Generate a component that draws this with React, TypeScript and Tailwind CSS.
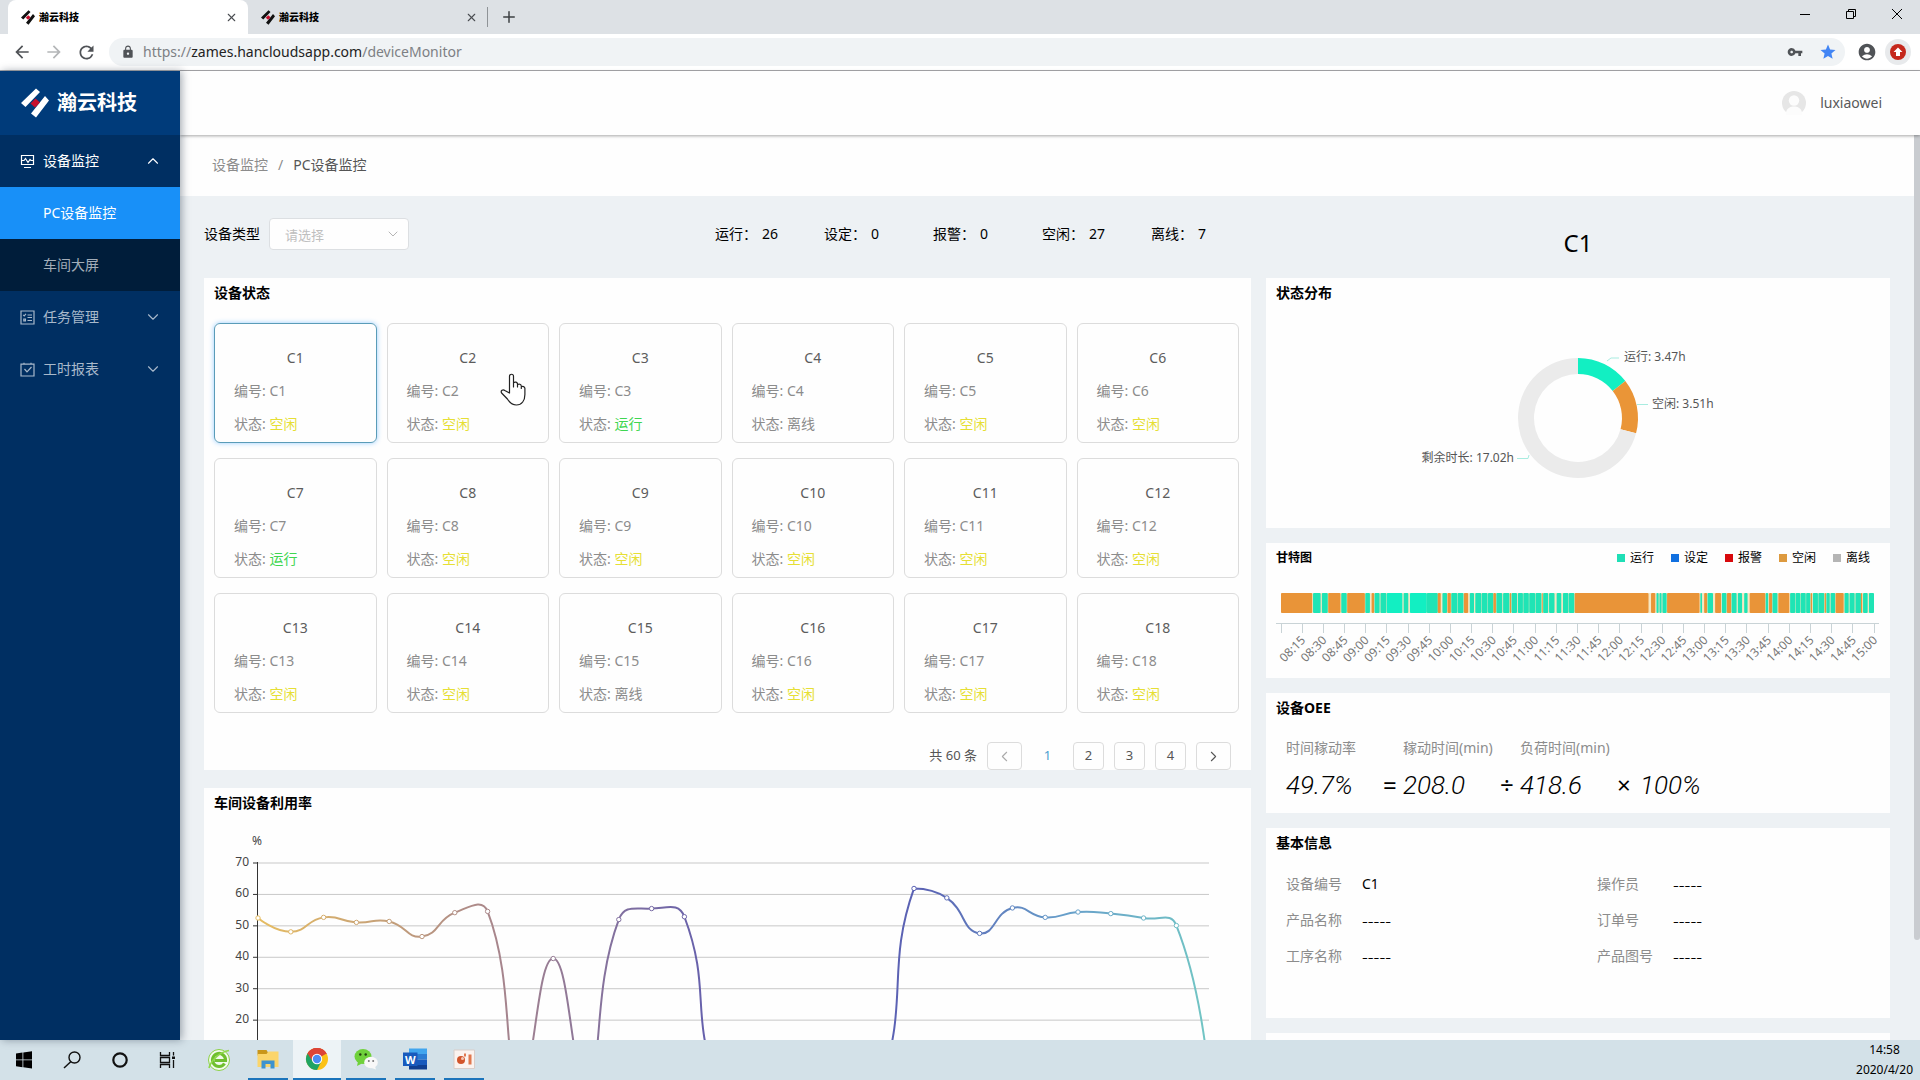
import type { ReactNode } from 'react'
import clsx from 'clsx'
import { ChevronDown, ChevronLeft, ChevronRight, ChevronUp, Plus, X } from 'lucide-react'
import { MdAccountCircle, MdArrowBack, MdArrowForward, MdLock, MdRefresh, MdStar, MdVpnKey } from 'react-icons/md'

type Status = '运行' | '空闲' | '离线'

const STATUS_COLOR: Record<Status, string> = {
  运行: 'text-[#3fd651]',
  空闲: 'text-[#e6df35]',
  离线: 'text-[#8c8c8c]',
}

const STATUS_OVERRIDES: Record<string, Status> = { C3: '运行', C4: '离线', C7: '运行', C15: '离线' }

const devices = Array.from({ length: 18 }, (_, i) => {
  const name = `C${i + 1}`
  return { name, status: STATUS_OVERRIDES[name] ?? ('空闲' as Status) }
})

const counts = [
  ['运行', 26],
  ['设定', 0],
  ['报警', 0],
  ['空闲', 27],
  ['离线', 7],
] as const

const legend = [
  ['运行', 'bg-[#1fdfb6]'],
  ['设定', 'bg-[#1170e0]'],
  ['报警', 'bg-[#d8090c]'],
  ['空闲', 'bg-[#dd9a3f]'],
  ['离线', 'bg-[#b5b5b5]'],
] as const

const info = [
  ['设备编号', 'C1'],
  ['操作员', ''],
  ['产品名称', ''],
  ['订单号', ''],
  ['工序名称', ''],
  ['产品图号', ''],
]

// [idle?, start, end] on a 0..1407 scale covering 08:00 - 15:00
const gantt: [0 | 1, number, number][] = [
  [1, 0, 74], [0, 76, 94], [0, 97, 111], [1, 112, 141], [0, 143, 156], [1, 157, 199],
  [0, 200, 211], [1, 215, 221], [0, 222, 234], [0, 236, 250], [0, 251, 288], [0, 291, 302],
  [0, 306, 346], [0, 346, 372], [1, 372, 379], [0, 383, 394], [1, 395, 403], [0, 404, 418],
  [0, 419, 433], [1, 434, 444], [0, 448, 458], [0, 461, 475], [0, 476, 490], [0, 491, 504],
  [1, 504, 510], [0, 511, 525], [0, 527, 542], [1, 543, 546], [0, 547, 560], [0, 562, 574],
  [0, 575, 588], [0, 589, 603], [0, 604, 618], [1, 619, 621], [0, 622, 634], [0, 636, 649],
  [0, 654, 665], [0, 669, 682], [0, 683, 696], [1, 697, 872], [1, 878, 888], [0, 891, 896],
  [0, 898, 903], [0, 905, 915], [1, 916, 993], [0, 995, 999], [1, 1004, 1011], [0, 1012, 1025],
  [1, 1030, 1044], [0, 1046, 1057], [1, 1058, 1068], [0, 1069, 1081], [0, 1084, 1094], [0, 1099, 1107],
  [1, 1112, 1149], [0, 1150, 1156], [1, 1158, 1165], [0, 1166, 1178], [1, 1180, 1206], [0, 1208, 1220],
  [0, 1221, 1232], [0, 1233, 1245], [0, 1246, 1256], [1, 1257, 1260], [0, 1262, 1274], [0, 1275, 1289],
  [1, 1290, 1293], [0, 1294, 1302], [0, 1304, 1315], [1, 1316, 1335], [0, 1337, 1347], [0, 1349, 1361],
  [0, 1363, 1376], [1, 1376, 1379], [0, 1381, 1392], [0, 1395, 1407],
]

const usage = [
  52.5, 48.1, 52.7, 51.1, 51.4, 46.6, 54.2, 54.6, 0, 39.6, 0, 52, 55.5, 52.9, 0,
  0, 0, 0, 0, 0, 61.9, 58.9, 47.6, 55.7, 52.7, 54.4, 53.9, 52.5, 50.1, 0,
]

function Logo({ className, bar }: { className: string, bar: string }) {
  return (
    <svg className={className} viewBox="0 0 28 30" aria-hidden="true">
      <path d="M15 0.5 19 4 4.5 19 0 15ZM24 8 28 12.5 15 29.5 10 25.5Z" fill={bar} />
      <path d="M14.5 10.5 19 14.500 14 19.500 9.500 15.500Z" fill="#c8102e" />
    </svg>
  )
}

function Tab({ active }: { active?: boolean }) {
  return (
    <div className={clsx('flex h-full w-60 items-center gap-1 pl-[13px] pr-2.5', active && 'rounded-t-lg bg-white')}>
      <Logo className="h-[15px] w-3.5" bar="#111" />
      <span className="flex-1 text-[10px] font-black text-black">瀚云科技</span>
      <button type="button" aria-label="关闭标签页"><X size={13} strokeWidth={2} className="text-[#4a4d51]" /></button>
    </div>
  )
}

function BrowserBar() {
  return (
    <header className="shrink-0 border-b border-[#a9a9ad]">
      <div className="flex h-[34px] items-center bg-[#dde1e5] pl-2">
        <Tab active />
        <Tab />
        <span className="-ml-px h-5 w-px bg-[#8f9397]" />
        <button type="button" aria-label="新标签页" className="ml-3"><Plus size={18} strokeWidth={2} className="text-[#3c4043]" /></button>
        <div className="ml-auto flex gap-8 pb-1.5 pr-4 text-black">
          <button type="button" aria-label="最小化">
            <svg width="14" height="14" viewBox="0 0 14 14"><path d="M2 7.5H12" stroke="currentColor" /></svg>
          </button>
          <button type="button" aria-label="还原">
            <svg width="14" height="14" viewBox="0 0 14 14" fill="none" stroke="currentColor"><path d="M2.5 4.5h7v7h-7zM4.5 4.5v-2h7v7h-2" /></svg>
          </button>
          <button type="button" aria-label="关闭">
            <svg width="14" height="14" viewBox="0 0 14 14"><path d="M2 2 12 12M12 2 2 12" stroke="currentColor" /></svg>
          </button>
        </div>
      </div>
      <div className="flex h-9 items-center gap-3 bg-white pl-3 pr-[9px] text-[#505357]">
        <button type="button" aria-label="后退"><MdArrowBack size={20} /></button>
        <button type="button" aria-label="前进"><MdArrowForward size={20} className="text-[#b4b6b8]" /></button>
        <button type="button" aria-label="刷新"><MdRefresh size={21} /></button>
        <div className="flex h-7 flex-1 items-center rounded-full bg-[#f0f3f5] pl-3 pr-2">
          <MdLock size={14} />
          <span className="ml-2 text-sm leading-5 text-[#7d8084]">
            https://
            <span className="text-[#222]">zames.hancloudsapp.com</span>
            /deviceMonitor
          </span>
          <span className="ml-auto flex items-center gap-4">
            <MdVpnKey size={16} />
            <MdStar size={18} className="text-[#4285f4]" />
          </span>
        </div>
        <MdAccountCircle size={20} />
        <span className="-ml-1 flex size-[26px] items-center justify-center rounded-full bg-[#e8eaec]">
          <svg width="16" height="16" viewBox="0 0 16 16">
            <circle cx="8" cy="8" r="8" fill="#c5281c" />
            <path d="M8 3.5 12.5 8H10v4H6V8H3.5Z" fill="#fff" />
          </svg>
        </span>
      </div>
    </header>
  )
}

function MenuItem({ icon, label, open }: { icon: ReactNode, label: string, open?: boolean }) {
  return (
    <button type="button" className={clsx('flex h-[52px] w-full items-center gap-2 pl-5 pr-[18px]', open ? 'text-white' : 'text-[#a8b9cb]')}>
      <svg width="15" height="15" viewBox="0 0 15 15" fill="none" stroke="currentColor" strokeWidth="1.2">{icon}</svg>
      <span className="flex-1 text-left">{label}</span>
      {open ? <ChevronUp size={18} strokeWidth={1.5} /> : <ChevronDown size={18} strokeWidth={1.5} />}
    </button>
  )
}

function Sidebar() {
  return (
    <aside className="z-10 w-[180px] shrink-0 bg-[#002f62] text-sm shadow-[2px_0_8px_rgba(0,21,41,0.35)]">
      <div className="flex h-16 items-center gap-2 bg-[#003b7a] pl-[21px]">
        <Logo className="h-[30px] w-7" bar="#fff" />
        <span className="text-xl font-bold text-white">瀚云科技</span>
      </div>
      <nav>
        <MenuItem
          open
          label="设备监控"
          icon={<path d="M1.5 1.5h12v9h-12zM4 13.5h7M1.5 6.5H4l1.5-2 2.5 4 2-3 1 1h2.5" />}
        />
        <div className="bg-[#001d3a]">
          <a href="#pc" className="flex h-[52px] items-center bg-[#1890f8] pl-[43px] text-white">PC设备监控</a>
          <a href="#screen" className="flex h-[52px] items-center pl-[43px] text-[#a3adb8]">车间大屏</a>
        </div>
        <MenuItem label="任务管理" icon={<path d="M1 1h13v13H1zM3.2 4.8l1 1 1.8-2M7.5 5H12M7.5 7.5H12M7.5 10.5H12M3.8 9h1.6v1.8H3.8z" />} />
        <MenuItem label="工时报表" icon={<path d="M1 2.2h13V14H1zM4 .8v2M11 .8v2M4.5 7l2.5 2.8L11.5 5" />} />
      </nav>
    </aside>
  )
}

function Panel({ title, extra, small, className, children }: { title: string, extra?: ReactNode, small?: boolean, className?: string, children?: ReactNode }) {
  return (
    <section className={clsx('bg-[#fefefe] pt-1', className)}>
      <div className="flex items-center justify-between pl-2.5 pr-5">
        <h2 className={clsx('font-bold leading-[22px] text-black', small ? 'text-xs' : 'text-sm')}>{title}</h2>
        {extra}
      </div>
      {children}
    </section>
  )
}

function HandCursor() {
  return (
    <svg className="pointer-events-none absolute left-[112px] top-[49px]" width="27" height="33" viewBox="0 0 27 33" aria-hidden="true">
      <path
        d="M9.500 20V3.200c0-2.600 4-2.600 4 0V14v-4.200c1.500-1.400 3.800-.8 4 1.200v3-2.400c1.500-1 3.600-.4 3.800 1.400v2.400-1.600c1.500-.9 3.500-.2 3.600 1.600v6.100c0 6-3 10.500-8.500 10.500-4.500 0-6.600-2-9-6L1.600 20c-1.400-2.400 1.400-4 3.200-2.500z"
        fill="#fff"
        stroke="#222"
        strokeWidth="1.200"
        strokeLinejoin="round"
      />
    </svg>
  )
}

function DeviceCard({ name, status, selected }: { name: string, status: Status, selected: boolean }) {
  return (
    <button
      type="button"
      className={clsx(
        'relative flex h-[120px] flex-col gap-[11px] rounded-md border px-[19px] pt-[23px] text-left text-sm leading-[22px] text-[#8c8c8c]',
        selected ? 'border-[#5a9cb8] shadow-[0_0_5px_rgba(24,144,255,0.45)]' : 'border-[#dcdcdc]',
      )}
    >
      <span className="w-full text-center text-[#5c5c5c]">{name}</span>
      <span>{`编号: ${name}`}</span>
      <span>
        {'状态: '}
        <span className={STATUS_COLOR[status]}>{status}</span>
      </span>
      {name === 'C2' && <HandCursor />}
    </button>
  )
}

function Pagination() {
  const box = 'flex h-7 items-center justify-center rounded border border-[#dcdcdc]'
  return (
    <div className="-mb-0.5 mt-[29px] flex items-center justify-end gap-2.5 pr-5 text-[13px] text-[#555]">
      <span>共 60 条</span>
      <button type="button" disabled aria-label="上一页" className={clsx(box, 'w-[35px]')}><ChevronLeft size={17} strokeWidth={1.5} className="text-[#aaa]" /></button>
      <button type="button" className="flex h-7 w-[31px] items-center justify-center rounded bg-[#fefefe] text-[#4a9fd0]">1</button>
      {[2, 3, 4].map(n => <button key={n} type="button" className={clsx(box, 'w-[31px]')}>{n}</button>)}
      <button type="button" aria-label="下一页" className={clsx(box, 'w-[35px]')}><ChevronRight size={17} strokeWidth={1.5} /></button>
    </div>
  )
}

const BASE_Y = 269
const TOP_Y = 49
const pts = usage.map((v, i) => [54 + i * 32.8, BASE_Y - v * ((BASE_Y - TOP_Y) / 70)])

// smooth bezier through all points, control points kept inside the plot
function smoothPath(p: number[][]) {
  const clampY = (y: number) => Math.min(BASE_Y, Math.max(pts[20][1], y))
  let d = `M${p[0][0]} ${p[0][1]}`
  let c0 = p[0]
  for (let i = 1; i < p.length; i++) {
    const cur = p[i]
    const next = p[i + 1]
    let c1 = cur
    let nextC0 = cur
    if (next) {
      const prev = p[i - 1]
      const v = [next[0] - prev[0], next[1] - prev[1]]
      const a = Math.hypot(cur[0] - prev[0], cur[1] - prev[1])
      const b = Math.hypot(next[0] - cur[0], next[1] - cur[1])
      const r = b / (a + b)
      c1 = [cur[0] - v[0] * 0.5 * (1 - r), clampY(cur[1] - v[1] * 0.5 * (1 - r))]
      nextC0 = [cur[0] + v[0] * 0.5 * r, clampY(cur[1] + v[1] * 0.5 * r)]
    }
    d += `C${c0[0]} ${c0[1]} ${c1[0]} ${c1[1]} ${cur[0]} ${cur[1]}`
    c0 = nextC0
  }
  return d
}

function UsageChart() {
  return (
    <svg className="block w-full" viewBox="0 0 1047 320" role="img" aria-label="车间设备利用率">
      <defs>
        <linearGradient id="usage" gradientUnits="userSpaceOnUse" x1="54" y1="0" x2="1005" y2="0">
          <stop offset="0" stopColor="#e6bd62" />
          <stop offset="0.25" stopColor="#a8868c" />
          <stop offset="0.5" stopColor="#5d5bb0" />
          <stop offset="0.7" stopColor="#5b63b4" />
          <stop offset="0.85" stopColor="#679fca" />
          <stop offset="1" stopColor="#72c6c4" />
        </linearGradient>
      </defs>
      <g fontSize="12" fill="#444">
        <text x="53" y="31" textAnchor="middle">%</text>
        {[70, 60, 50, 40, 30, 20].map((v, i) => {
          const y = TOP_Y + (i * (BASE_Y - TOP_Y)) / 7
          return (
            <g key={v}>
              <path d={`M54 ${y}H1005`} stroke="#c8c8c8" />
              <path d={`M49 ${y}H54`} stroke="#333" />
              <text x="45" y={y + 3} textAnchor="end">{v}</text>
            </g>
          )
        })}
      </g>
      <path d={`M53.500 48V${BASE_Y}`} stroke="#333" />
      <path d={smoothPath(pts)} fill="none" stroke="url(#usage)" strokeWidth="2" />
      {pts.map(([x, y]) => <circle key={x} cx={x} cy={y} r="2.200" fill="#fff" stroke="url(#usage)" />)}
    </svg>
  )
}

function ring(from: number, to: number) {
  const at = (h: number, r: number) => {
    const a = (h / 24) * Math.PI * 2
    return `${312 + r * Math.sin(a)} ${114 - r * Math.cos(a)}`
  }
  const big = to - from > 12 ? 1 : 0
  return `M${at(from, 60)}A60 60 0 ${big} 1 ${at(to, 60)}L${at(to, 44)}A44 44 0 ${big} 0 ${at(from, 44)}Z`
}

function StatusRing() {
  return (
    <svg className="block w-full" viewBox="0 0 624 224" role="img" aria-label="状态分布">
      <path d={ring(0, 3.47)} fill="#12efc2" />
      <path d={ring(3.47, 6.98)} fill="#ea9537" />
      <path d={ring(6.98, 24)} fill="#ebebeb" />
      <g fill="none" stroke="#a8ece0">
        <path d="M341 57 345 54H353" />
        <path d="M371 100.500H382" />
        <path d="M263 151 262 154.500H251" />
      </g>
      <g fontSize="12" fill="#555">
        <text x="358" y="57">运行: 3.47h</text>
        <text x="386" y="104">空闲: 3.51h</text>
        <text x="248" y="158" textAnchor="end">剩余时长: 17.02h</text>
      </g>
    </svg>
  )
}

function GanttChart() {
  const k = 593 / 1407
  const ticks = Array.from({ length: 29 }, (_, i) => {
    const min = 480 + i * 15
    const label = `${String(Math.floor(min / 60)).padStart(2, '0')}:${String(min % 60).padStart(2, '0')}`
    return { x: 15 + i * 21.18, label }
  })
  return (
    <svg className="block w-full" viewBox="0 0 624 109" role="img" aria-label="甘特图">
      <rect x="15" y="24" width="593" height="20" rx="1" fill="#f6e7c3" />
      {gantt.map(([idle, a, b]) => (
        <rect key={a} x={15 + a * k} y="24" width={(b - a) * k} height="20" rx="1" fill={idle ? '#e99438' : b - a > 30 ? '#12efc2' : '#1fe4b5'} />
      ))}
      <path d="M10 54.500H613" stroke="#c9d3d6" />
      {ticks.map(({ x, label }, i) => (
        <g key={label}>
          <path d={`M${Math.floor(x)}.5 54V64`} stroke="#c9d3d6" />
          {i > 0 && <text transform={`translate(${x + 4} 72) rotate(-45)`} textAnchor="end" fontSize="12" fill="#777">{label}</text>}
        </g>
      ))}
    </svg>
  )
}

function Oee() {
  const label = 'whitespace-nowrap text-sm leading-[22px] text-[#8c8c8c]'
  const value = 'font-[Roboto] text-[26px] font-light italic leading-8'
  return (
    <div className="mt-[18px] grid grid-cols-[97px_20px_97px_20px_97px_23px_auto] gap-y-2.5 pl-5 text-black">
      <span className={clsx(label, 'col-span-2')}>时间稼动率</span>
      <span className={clsx(label, 'col-span-2')}>稼动时间(min)</span>
      <span className={clsx(label, 'col-span-3')}>负荷时间(min)</span>
      <span className={value}>49.7%</span>
      <span className="text-2xl leading-8">=</span>
      <span className={value}>208.0</span>
      <span className="text-2xl leading-8">÷</span>
      <span className={value}>418.6</span>
      <span className="text-2xl leading-8">×</span>
      <span className={value}>100%</span>
    </div>
  )
}

function TaskButton({ label, running, active, children }: { label: string, running?: boolean, active?: boolean, children: ReactNode }) {
  return (
    <button type="button" aria-label={label} className={clsx('flex h-10 w-12 flex-col items-center justify-between', active && 'bg-[#edf3f6]')}>
      <span className="flex flex-1 items-center">
        <svg width="24" height="24" viewBox="0 0 24 24">{children}</svg>
      </span>
      {running && <span className={clsx('h-0.5 bg-[#1b74bb]', active ? 'w-full' : 'w-10')} />}
    </button>
  )
}

function Taskbar() {
  return (
    <footer className="flex h-10 shrink-0 items-center justify-between bg-[#d3e1e8] pr-[7px]">
      <div className="flex">
        <TaskButton label="开始"><path d="M4 5.500 10.500 4.600V11.500H4ZM11.300 4.500 20 3.300V11.500H11.300ZM4 12.300H10.500V19.200L4 18.300ZM11.300 12.300H20V20.500L11.300 19.300Z" /></TaskButton>
        <TaskButton label="搜索"><path d="M4 20 11 13.500" stroke="#111" strokeWidth="1.500" /><circle cx="14.500" cy="9.500" r="5.500" fill="none" stroke="#111" strokeWidth="1.400" /></TaskButton>
        <TaskButton label="Cortana"><circle cx="12" cy="12" r="6.700" fill="none" stroke="#111" strokeWidth="2.200" /></TaskButton>
        <TaskButton label="任务视图"><path d="M4.500 4v3.500h9V4M4.500 20v-3.500h9V20M4.500 9.500h9v5h-9zM17.500 4v3.500M17.500 12v8" fill="none" stroke="#111" strokeWidth="1.300" /><path d="M16 8.500h3v2.500h-3z" fill="#111" /></TaskButton>
        <div className="ml-[3px] flex gap-px">
          <TaskButton label="360浏览器">
            <circle cx="12" cy="12" r="10.500" fill="#f2faec" stroke="#8cd147" />
            <path d="M17.500 15.500A6.500 6.500 0 1 1 18.500 12.500H7.500" fill="none" stroke="#6fbf2e" strokeWidth="3.200" />
            <path d="M2 20C4 12 13 4 22 2.500" fill="none" stroke="#8fd84b" strokeWidth="1.600" />
          </TaskButton>
          <TaskButton label="文件资源管理器" running>
            <path d="M1.500 3h9l1.500 2.500v3h-10.500z" fill="#c9961a" />
            <path d="M1.500 7h9l2-2.500H22.500V20H1.500z" fill="#fbd56b" />
            <path d="M5.500 21.500V13.500H18.500V21.500H14.500V17H9.500v4.500z" fill="#3d93cf" />
          </TaskButton>
          <TaskButton label="Chrome" running active>
            <circle cx="12" cy="12" r="11" fill="#fbc116" />
            <path d="M12 12 2.470 6.500A11 11 0 0 1 21.530 6.500Z" fill="#dc4437" />
            <path d="M12 12 2.470 6.500A11 11 0 0 0 12 23L16.300 14.500Z" fill="#1fa463" />
            <path d="M12 7H21.800A11 11 0 0 0 2.470 6.500L7.700 14.500Z" fill="#dc4437" />
            <circle cx="12" cy="12" r="5.200" fill="#fff" />
            <circle cx="12" cy="12" r="4.200" fill="#4b8bf4" />
          </TaskButton>
          <TaskButton label="微信" running>
            <ellipse cx="9" cy="9.500" rx="8.500" ry="7.500" fill="#6fd13b" />
            <path d="M4 14.500 3 19 8 16.500Z" fill="#6fd13b" />
            <circle cx="6.300" cy="7.500" r="1.200" fill="#23400f" />
            <circle cx="11.700" cy="7.500" r="1.200" fill="#23400f" />
            <ellipse cx="17" cy="15.500" rx="6.800" ry="5.800" fill="#f8f8f8" />
            <path d="M21 19.500 22 22.500 17.500 21Z" fill="#f8f8f8" />
            <circle cx="14.800" cy="14" r="1" fill="#777" />
            <circle cx="19.200" cy="14" r="1" fill="#777" />
          </TaskButton>
          <TaskButton label="Word" running>
            <path d="M6 1.500H24V7H6z" fill="#41a5ee" />
            <path d="M6 7H24v5.500H6z" fill="#2b7cd3" />
            <path d="M6 12.500H24V18H6z" fill="#185abd" />
            <path d="M6 18H24v4.500H6z" fill="#103f91" />
            <path d="M0 5.500H14.500V19H0z" fill="#185abd" />
            <text x="7.200" y="16.500" textAnchor="middle" fontSize="11" fontWeight="700" fill="#fff">W</text>
          </TaskButton>
          <TaskButton label="录屏" running>
            <path d="M2 3H22.500V21.500H2z" fill="#fbf3ef" stroke="#d9cdc8" />
            <circle cx="9" cy="13" r="4" fill="#d2552b" />
            <circle cx="10.500" cy="11.500" r="1.500" fill="#f7c7b4" />
            <path d="M12 6.500h2v3h-2zM16.500 7.500h3v10h-3z" fill="#e0784f" />
          </TaskButton>
        </div>
      </div>
      <div className="flex flex-col items-center text-xs leading-5 text-black">
        <span>14:58</span>
        <span>2020/4/20</span>
      </div>
    </footer>
  )
}

export default function App() {
  return (
    <div className="flex h-screen flex-col overflow-hidden bg-[#edf1f4] font-['Noto_Sans','Noto_Sans_CJK_SC',sans-serif]">
      <BrowserBar />
      <div className="flex min-h-0 flex-1">
        <Sidebar />
        <div className="flex min-w-0 flex-1 flex-col">
          <div className="z-[5] flex h-16 shrink-0 items-center justify-end gap-3.5 bg-[#fefefe] pr-[38px] shadow-[0_1px_3px_rgba(0,0,0,0.35)]">
            <svg width="24" height="24" viewBox="0 0 24 24" aria-hidden="true">
              <circle cx="12" cy="12" r="12" fill="#e6e6e6" />
              <circle cx="12" cy="9.500" r="5.200" fill="#fcfcfc" />
              <path d="M4 21.500C5 16.500 9 15.500 12 15.500s7 1 8 6V24H4z" fill="#fcfcfc" />
            </svg>
            <span className="text-sm text-[#595959]">luxiaowei</span>
          </div>
          <div className="flex min-h-0 flex-1">
            <main className="min-w-0 flex-1 overflow-hidden">
              <nav aria-label="面包屑" className="flex h-[61px] items-center gap-2.5 bg-[#fefefe] pb-0.5 pl-8 text-sm text-[#8c8c8c]">
                <a href="#monitor">设备监控</a>
                <span>/</span>
                <span className="text-[#555]">PC设备监控</span>
              </nav>
              <div className="grid grid-cols-[1047fr_624fr] gap-x-[15px] px-6">
                <div className="min-w-0">
                  <div className="flex h-[82px] pt-[22px] text-sm leading-8 text-black">
                    <label htmlFor="device-type">设备类型</label>
                    <div className="relative ml-[9px] h-8 w-[140px]">
                      <select id="device-type" defaultValue="" className="h-8 w-full appearance-none rounded border border-[#dcdfe2] bg-[#fefefe] pl-[15px] text-[13px] text-[#bfbfbf]">
                        <option value="">请选择</option>
                      </select>
                      <ChevronDown size={16} strokeWidth={1.5} className="pointer-events-none absolute right-2 top-2 text-[#b5b5b5]" />
                    </div>
                    <div className="ml-auto mr-11 flex">
                      {counts.map(([label, n]) => (
                        <div key={label} className="flex w-[109px] gap-[5px] last:w-14">
                          <span>{`${label}：`}</span>
                          <span>{n}</span>
                        </div>
                      ))}
                    </div>
                  </div>
                  <Panel title="设备状态" className="mb-5">
                    <div className="mt-[19px] grid grid-cols-6 gap-x-2.5 gap-y-[15px] pl-2.5 pr-3">
                      {devices.map(d => <DeviceCard key={d.name} {...d} selected={d.name === 'C1'} />)}
                    </div>
                    <Pagination />
                  </Panel>
                  <Panel title="车间设备利用率">
                    <UsageChart />
                  </Panel>
                </div>
                <div className="min-w-0">
                  <h1 className="flex h-[82px] items-center justify-center pt-3 text-2xl text-black">C1</h1>
                  <div className="flex flex-col gap-[15px]">
                    <Panel title="状态分布"><StatusRing /></Panel>
                    <Panel
                      small
                      title="甘特图"
                      extra={(
                        <ul className="flex gap-[17px] text-xs text-black">
                          {legend.map(([label, color]) => (
                            <li key={label} className="flex items-center gap-[5px]">
                              <span className={clsx('size-2', color)} />
                              {label}
                            </li>
                          ))}
                        </ul>
                      )}
                    >
                      <GanttChart />
                    </Panel>
                    <Panel title="设备OEE" className="h-[120px]"><Oee /></Panel>
                    <Panel title="基本信息" className="h-[190px]">
                      <dl className="mt-3 grid grid-cols-2 pl-5 text-sm leading-9">
                        {info.map(([label, value]) => (
                          <div key={label} className="flex h-9 even:pl-[9px]">
                            <dt className="w-[76px] text-[#8c8c8c]">{label}</dt>
                            <dd className={clsx('text-black', !value && 'text-lg font-light leading-9')}>{value || '-----'}</dd>
                          </div>
                        ))}
                      </dl>
                    </Panel>
                    <section className="h-40 bg-[#fefefe]" />
                  </div>
                </div>
              </div>
            </main>
            <div className="w-1.5 shrink-0">
              <div className="h-[89%] rounded-b-full bg-[#c9ccd0]" />
            </div>
          </div>
        </div>
      </div>
      <Taskbar />
    </div>
  )
}
